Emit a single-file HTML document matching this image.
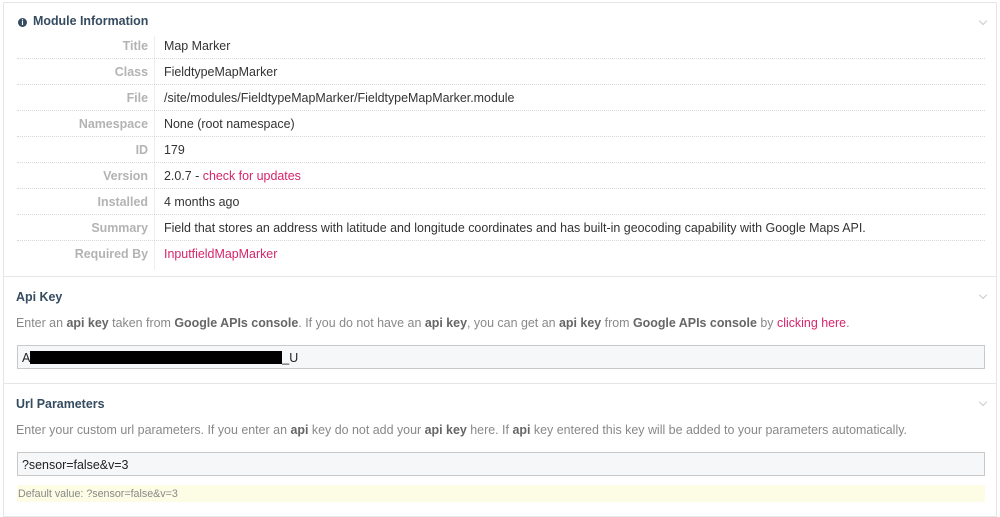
<!DOCTYPE html>
<html><head><meta charset="utf-8"><style>
*{margin:0;padding:0;box-sizing:border-box}
body{width:1000px;height:516px;background:#fff;font-family:"Liberation Sans",Arial,sans-serif;font-size:12.45px;color:#333;position:relative;overflow:hidden}
.panel{position:absolute;left:3px;width:994px;border:1px solid #e4e6e8;background:#fff}
.abs{position:absolute;white-space:nowrap}
h3{position:absolute;font-size:12.45px;font-weight:bold;color:#354b60;left:12px}
.row{position:absolute;left:13px;width:968px;height:26px;border-bottom:1px dotted #d8d8d8}
.lab{position:absolute;right:837px;top:6px;color:#b3b3b3;font-weight:bold;text-align:right;white-space:nowrap}
.val{position:absolute;left:147px;top:6px;white-space:nowrap}
.vline{position:absolute;left:150px;top:33px;width:1px;height:234px;background:#eee}
a{color:#d6246b;text-decoration:none}
.desc{position:absolute;left:12px;color:#888;white-space:nowrap}
.desc b{color:#666}
.inp{position:absolute;left:13px;width:968px;height:24px;border:1px solid #c9c9c9;background:#f6f7f8;padding:5px 4px;color:#222}
.chev{position:absolute;right:10px;width:6px;height:6px;border-right:1px solid #ccc;border-bottom:1px solid #ccc;transform:rotate(45deg)}
</style></head><body>
<div class="panel" style="top:2px;height:275px">
<h3 style="top:11px;left:14px"><span style="display:inline-block;width:9px;height:9px;border-radius:50%;background:#354b60;color:#fff;font-size:8px;line-height:9px;text-align:center;margin-right:6px;vertical-align:0">i</span>Module Information</h3>
<div class="chev" style="top:15px"></div>
<div class="vline"></div>
<div class="row" style="top:30px"><span class="lab">Title</span><span class="val">Map Marker</span></div>
<div class="row" style="top:56px"><span class="lab">Class</span><span class="val">FieldtypeMapMarker</span></div>
<div class="row" style="top:82px"><span class="lab">File</span><span class="val">/site/modules/FieldtypeMapMarker/FieldtypeMapMarker.module</span></div>
<div class="row" style="top:108px"><span class="lab">Namespace</span><span class="val">None (root namespace)</span></div>
<div class="row" style="top:134px"><span class="lab">ID</span><span class="val">179</span></div>
<div class="row" style="top:160px"><span class="lab">Version</span><span class="val">2.0.7 - <a>check for updates</a></span></div>
<div class="row" style="top:186px"><span class="lab">Installed</span><span class="val">4 months ago</span></div>
<div class="row" style="top:212px"><span class="lab">Summary</span><span class="val">Field that stores an address with latitude and longitude coordinates and has built-in geocoding capability with Google Maps API.</span></div>
<div class="row" style="top:238px;border:none"><span class="lab">Required By</span><span class="val"><a>InputfieldMapMarker</a></span></div>
</div>
<div class="panel" style="top:276px;height:108px">
<h3 style="top:13px">Api Key</h3>
<div class="chev" style="top:15px"></div>
<div class="desc" style="top:39px">Enter an <b>api key</b> taken from <b>Google APIs console</b>. If you do not have an <b>api key</b>, you can get an <b>api key</b> from <b>Google APIs console</b> by <a>clicking here</a>.</div>
<div class="inp" style="top:68px">A<span style="display:inline-block;width:252px;height:13px;background:#000;vertical-align:-2px"></span>_U</div>
</div>
<div class="panel" style="top:383px;height:134px">
<h3 style="top:13px">Url Parameters</h3>
<div class="chev" style="top:15px"></div>
<div class="desc" style="top:39px">Enter your custom url parameters. If you enter an <b>api</b> key do not add your <b>api key</b> here. If <b>api</b> key entered this key will be added to your parameters automatically.</div>
<div class="inp" style="top:68px">?sensor=false&amp;v=3</div>
<div class="abs" style="left:13px;top:101px;width:968px;height:17px;background:#fdfde6;color:#888;font-size:10.7px;padding:3px 0 0 1px">Default value: ?sensor=false&amp;v=3</div>
</div>
</body></html>
